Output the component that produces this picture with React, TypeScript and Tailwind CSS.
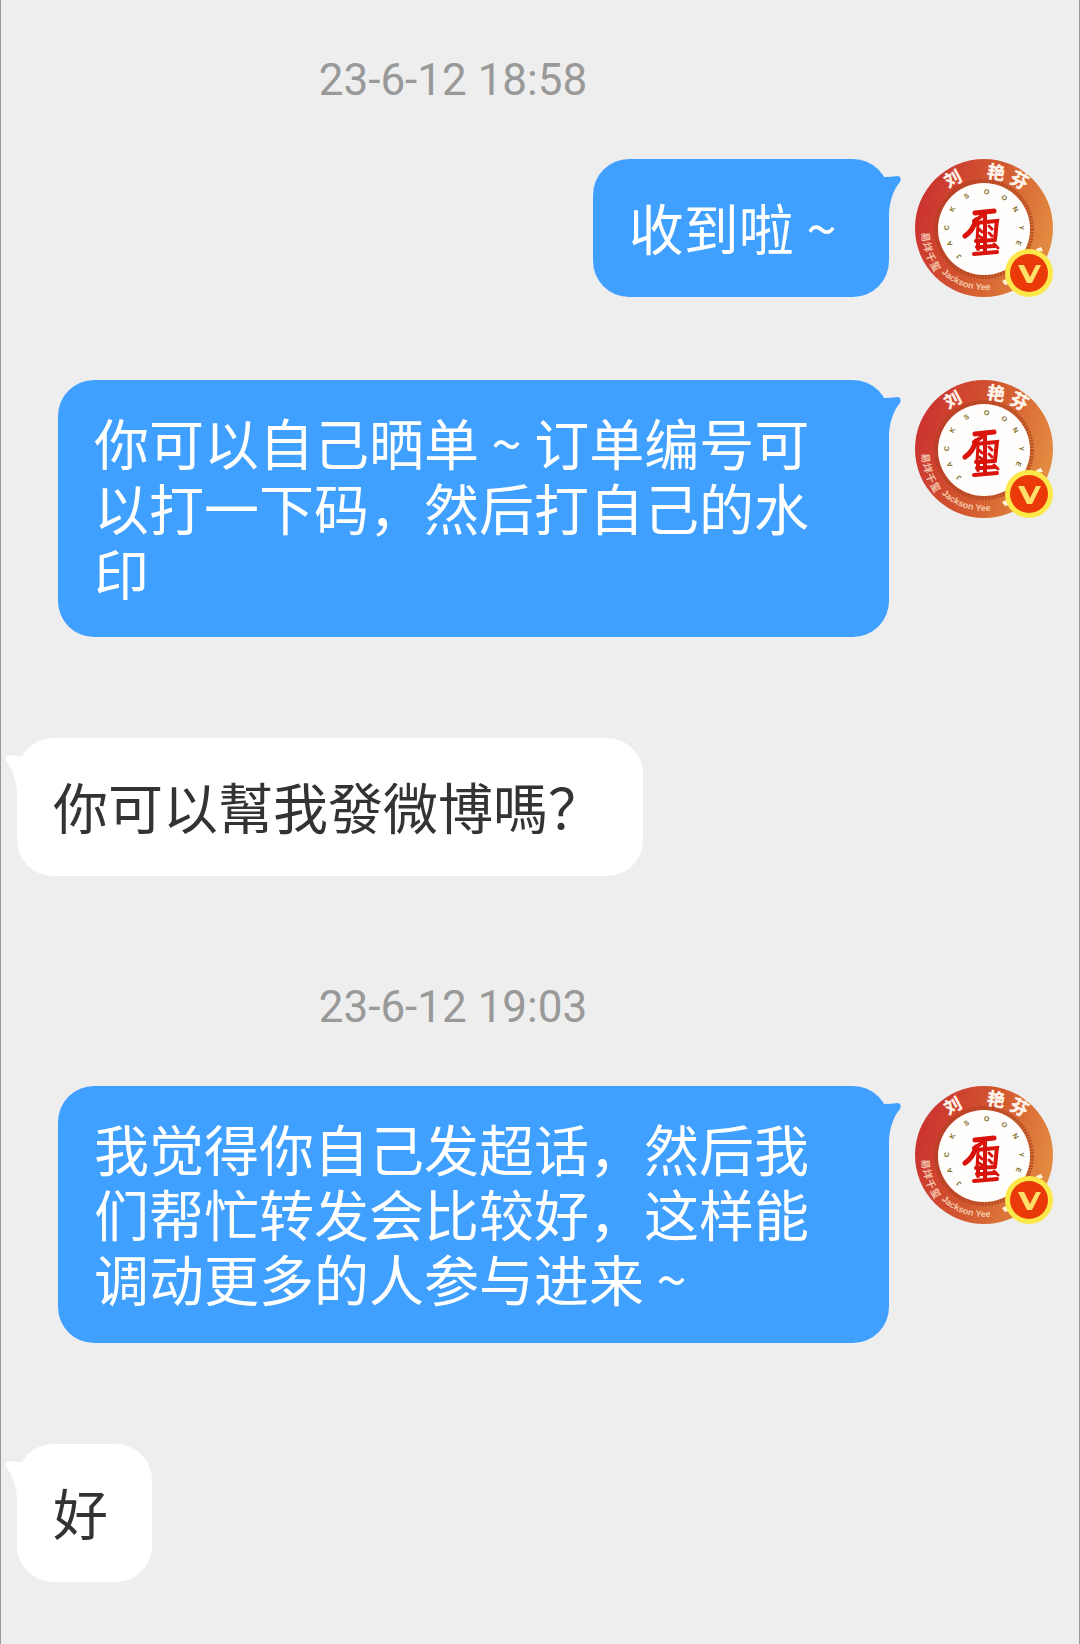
import React from 'react';

interface Message {
  id: number;
  from: 'me' | 'other';
  text: string;
  time?: string;
}

const messages: Message[] = [
  { id: 1, from: 'me', text: '收到啦 ~\u00a0', time: '23-6-12 18:58' },
  { id: 2, from: 'me', text: '你可以自己晒单 ~ 订单编号可以打一下码，然后打自己的水印' },
  { id: 3, from: 'other', text: '你可以幫我發微博嗎？' },
  { id: 4, from: 'me', text: '我觉得你自己发超话，然后我们帮忙转发会比较好，这样能调动更多的人参与进来 ~', time: '23-6-12 19:03' },
  { id: 5, from: 'other', text: '好' },
];

const ticks = [
  { char: 'J', angle: 222 },
  { char: 'A', angle: 247 },
  { char: 'C', angle: 272 },
  { char: 'K', angle: 302 },
  { char: 'S', angle: 332 },
  { char: 'O', angle: 4 },
  { char: 'O', angle: 33 },
  { char: 'N', angle: 58 },
  { char: 'Y', angle: 88 },
  { char: 'E', angle: 112 },
];

const Avatar = () => (
  <svg viewBox="0 0 138 138" className="size-[138px] shrink-0 overflow-visible" role="img" aria-label="头像">
    <defs>
      <linearGradient id="ring" x1="0" y1="0.3" x2="1" y2="0.6">
        <stop offset="0" stopColor="#cb3030" />
        <stop offset="0.5" stopColor="#d2582f" />
        <stop offset="1" stopColor="#e48d42" />
      </linearGradient>
      <path id="bottomArc" d="M 7 69 A 62 62 0 0 0 131 69" />
    </defs>
    <circle cx="69" cy="69" r="69" fill="url(#ring)" />
    <circle cx="69" cy="70" r="48" fill="none" stroke="#a8421c" strokeWidth="4" strokeDasharray="2 1" opacity="0.7" />
    <circle cx="69" cy="70" r="46" fill="#fffefc" />
    <g fontFamily="'Noto Sans CJK SC', sans-serif" fontWeight="900" fill="#fff3ea" textAnchor="middle">
      <text x="38" y="26" fontSize="17" transform="rotate(-28 38 20)">刘</text>
      <text x="81" y="20" fontSize="18" transform="rotate(10 81 14)">艳</text>
      <text x="104" y="28" fontSize="18" transform="rotate(28 104 22)">芬</text>
    </g>
    <g fontFamily="'Liberation Sans', sans-serif" fontWeight="700" fontSize="7" fill="#7d6d25" textAnchor="middle">
      {ticks.map(({ char, angle }) => (
        <text key={angle} x="69" y="35" transform={`rotate(${angle} 69 70)`}>{char}</text>
      ))}
    </g>
    <text fontFamily="'Liberation Sans', sans-serif" fontWeight="700" fontSize="9" fill="#f6c9a8">
      <textPath href="#bottomArc" startOffset="50">Jackson Yee</textPath>
    </text>
    <g fontFamily="'Noto Sans CJK SC', sans-serif" fontWeight="700" fontSize="10" fill="#f3c3ac" textAnchor="middle">
      <text x="11" y="82" transform="rotate(84 11 78)">易</text>
      <text x="13" y="92" transform="rotate(76 13 88)">烊</text>
      <text x="16" y="102" transform="rotate(68 16 98)">千</text>
      <text x="21" y="111" transform="rotate(60 21 107)">玺</text>
    </g>
    <g fill="none" stroke="#d8140c" strokeLinecap="round">
      <path d="M60 54 L79 52" strokeWidth="5" />
      <path d="M70 53 C67 58 63 60 59 62" strokeWidth="4" />
      <path d="M61 61 C59 68 56 73 50 77" strokeWidth="5" />
      <path d="M60 64 L82 62 C81 68 81 74 80 80" strokeWidth="4" />
      <path d="M70 55 L70 80" strokeWidth="4" />
      <path d="M63 65 L62 81 M64 70 L67 73 M74 67 L77 70 M74 74 L77 77 M64 77 L67 79" strokeWidth="3" />
      <path d="M61 82 L80 81 M62 88 L80 87 M59 95 L82 93 M70 82 L70 94 M63 83 L63 90" strokeWidth="4" />
      <path d="M79 85 L83 89" strokeWidth="3" />
    </g>
    <path d="M121 90 l5 -2 l2 4 l-6 1 z M87 122 l4 -2 l3 5 l-4 1 z" fill="#fff3d8" />
    <circle cx="114" cy="114" r="24" fill="#fde84a" />
    <circle cx="114" cy="114" r="19" fill="#ea3a0a" />
    <path d="M103 106 h6 l6 12 l6 -12 h5 l-9 18 h-5 z" fill="#ffe06a" />
  </svg>
);

const Tail = ({ mine }: { mine: boolean }) => (
  <svg
    viewBox="0 0 30 40"
    aria-hidden="true"
    className={`absolute top-4 h-10 w-[30px] ${
      mine ? '-right-3 text-[#40a0ff]' : '-left-3 -scale-x-100 text-white'
    }`}
  >
    <path d="M0 4 L13 2 Q20 2 27 1 Q31 2 29 7 C23 14 19 24 18 38 L0 40 Z" fill="currentColor" />
  </svg>
);

const Bubble = ({ from, text }: Pick<Message, 'from' | 'text'>) => {
  const mine = from === 'me';

  return (
    <div
      className={`relative flex min-h-[138px] min-w-[135px] max-w-[831px] items-center rounded-[36px] pt-[29px] pr-10 pb-[33px] pl-9 ${
        mine ? 'bg-[#40a0ff] text-white' : 'bg-white text-[#333333]'
      }`}
    >
      <Tail mine={mine} />
      <p className="relative text-[55px] leading-[65px]">{text}</p>
    </div>
  );
};

const App = () => {
  return (
    <main
      lang="zh-CN"
      className="min-h-screen border-x border-[#999999] bg-[#eeeeee] pt-[50px] pb-[62px] font-['Noto_Sans_CJK_SC',sans-serif]"
    >
      {messages.map(({ id, from, text, time }) => (
        <section key={id} className="group">
          {time && (
            <time className="block pr-[174px] pb-[49px] text-center font-['Roboto',sans-serif] text-[44px] leading-[60px] text-[#999999] group-not-first:pt-px">
              {time}
            </time>
          )}
          {from === 'me' ? (
            <div className="flex items-start justify-end gap-[26px] pr-[26px] pb-[83px]">
              <Bubble from={from} text={text} />
              <Avatar />
            </div>
          ) : (
            <div className="flex items-start pt-[18px] pb-[100px] pl-4 group-last:pb-0">
              <Bubble from={from} text={text} />
            </div>
          )}
        </section>
      ))}
    </main>
  );
};

export default App;
